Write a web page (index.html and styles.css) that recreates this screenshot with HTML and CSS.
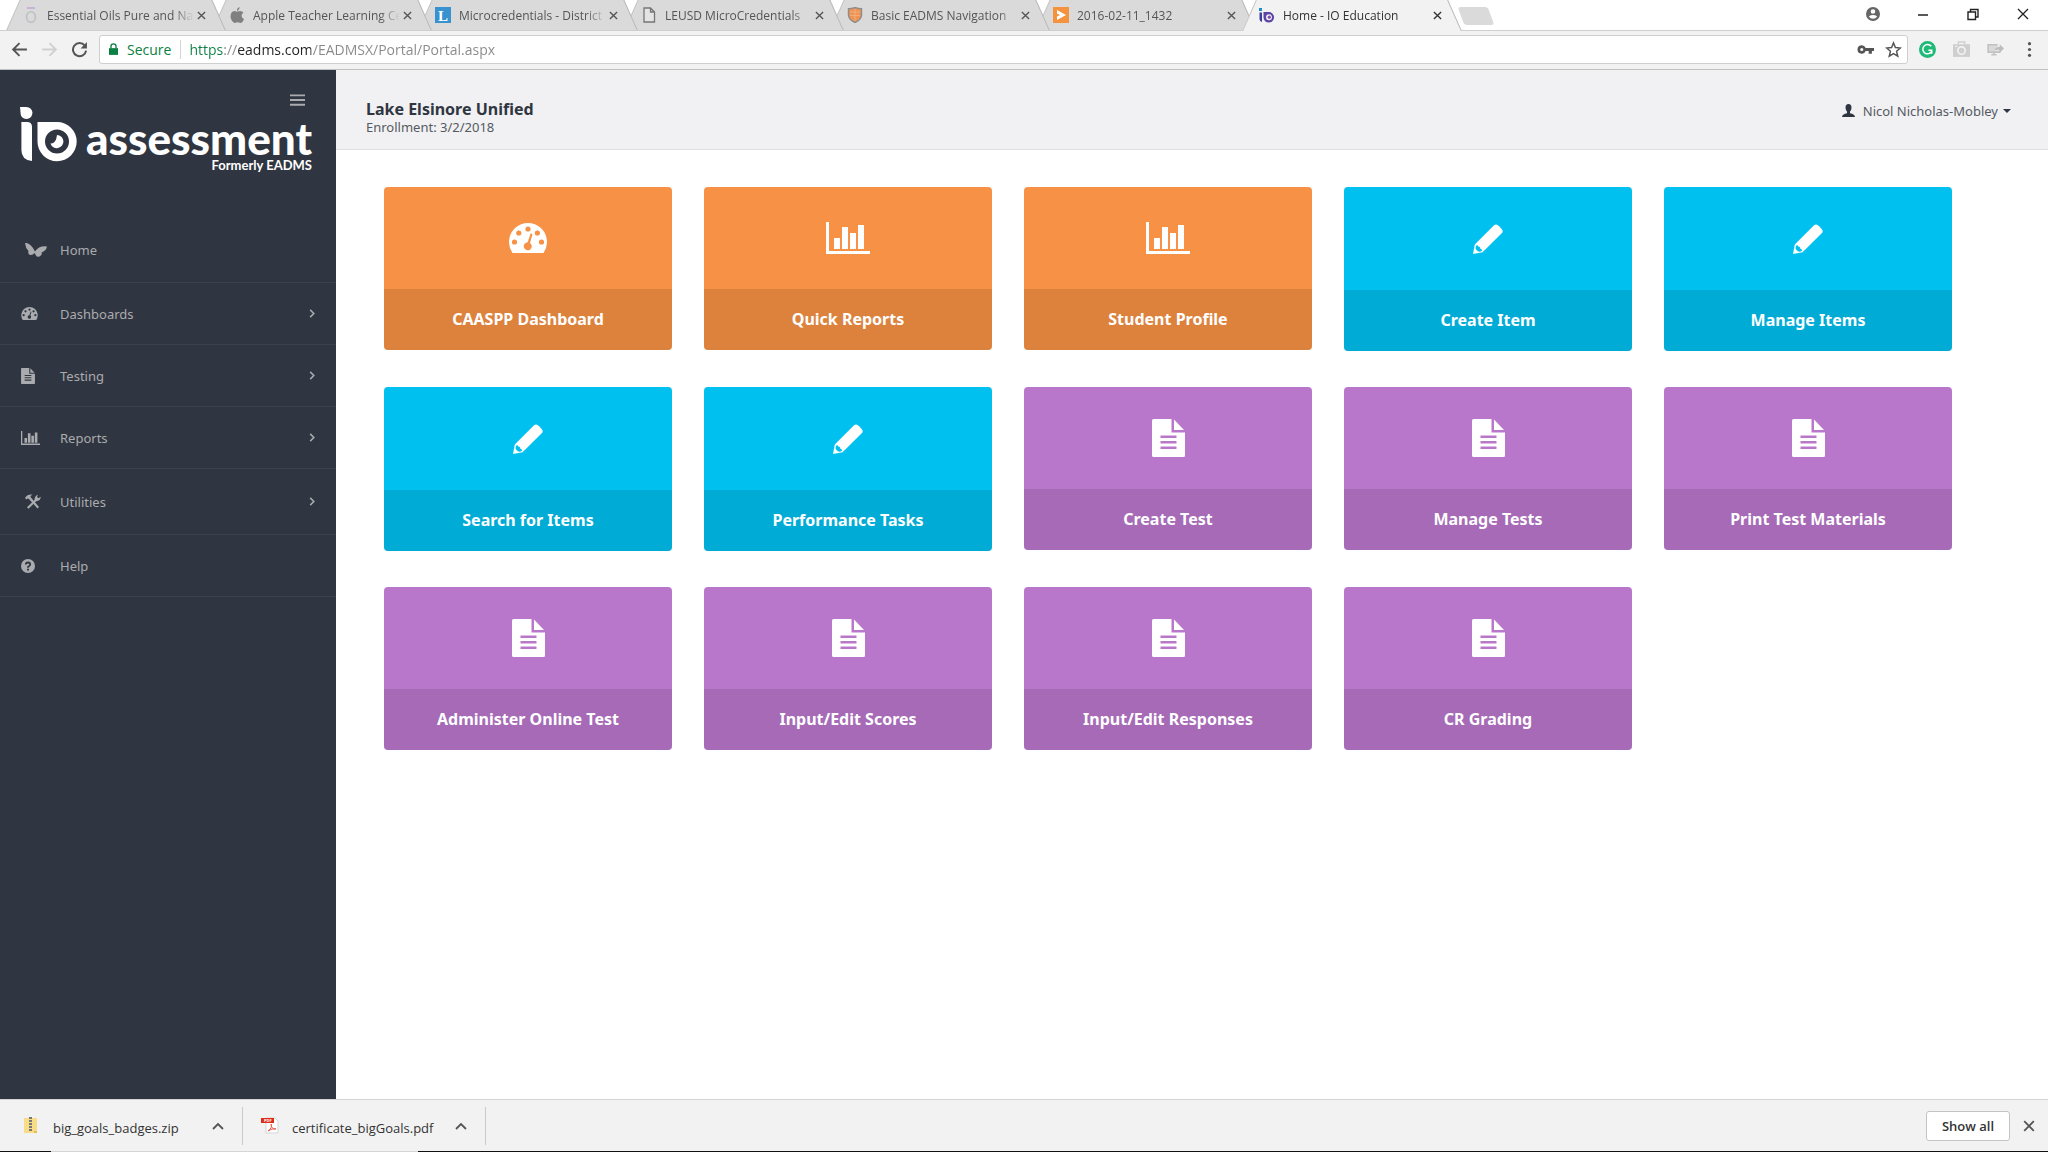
FILE: index.html
```html
<!DOCTYPE html>
<html lang="en">
<head>
    <meta charset="UTF-8">
    <meta name="viewport" content="width=device-width, initial-scale=1.0">
    <title>Home - IO Education</title>
    <link rel="stylesheet" href="styles.css">
</head>
<body>
    <!-- shared icons -->
    <svg class="sprite" aria-hidden="true">
        <symbol id="close" viewBox="0 0 10 10"><path d="M1 1l8 8M9 1l-8 8" fill="none" stroke="currentColor" stroke-width="1.5"/></symbol>
        <symbol id="right" viewBox="0 0 6 10"><path d="M1 1l4 4-4 4" fill="none" stroke="currentColor" stroke-width="1.7"/></symbol>
        <symbol id="up" viewBox="0 0 12 8"><path d="M1 7l5-5 5 5" fill="none" stroke="#555" stroke-width="1.8"/></symbol>
        <symbol id="gauge" viewBox="0 0 38 30">
            <path fill-rule="evenodd" d="M3.5 30A19 19 0 1 1 34.500 30ZM2.900 19a2.600 2.600 0 1 0 5.200 0a2.600 2.600 0 1 0-5.200 0ZM7.200 10a2.600 2.600 0 1 0 5.200 0a2.600 2.600 0 1 0-5.200 0ZM16.400 6a2.600 2.600 0 1 0 5.200 0a2.600 2.600 0 1 0-5.200 0ZM25.800 10a2.600 2.600 0 1 0 5.200 0a2.600 2.600 0 1 0-5.200 0ZM29.900 19a2.600 2.600 0 1 0 5.200 0a2.600 2.600 0 1 0-5.200 0ZM21.500 10.800L18.700 19.200A4 4 0 1 0 21 19.900L23.400 11.400Q22.800 10 21.500 10.800Z"/>
        </symbol>
        <symbol id="chart" viewBox="0 0 44 32"><path d="M0 0h3v29h41v3H0zM8 16h6v11H8zM16 5h6v22h-6zM24 11h6v16h-6zM32 3h6v24h-6z"/></symbol>
        <symbol id="pencil" viewBox="0 0 30 30"><path fill-rule="evenodd" d="M0 30L1.800 20.500L21 1.200Q23.500-.8 26.200 2.200L28.300 4.500Q31 7.300 28.500 9.500L9.500 28.300ZM3.300 21.500Q1.500 24.500 4 26.500Q6.500 29 8.800 26.800Q9.500 25.200 7.200 24.500Q7.400 22.500 5.300 22.500Q4.800 20.500 3.300 21.500Z"/></symbol>
        <symbol id="doc" viewBox="0 0 33 38"><path fill-rule="evenodd" d="M1.500 0H19.500V13.500H33V36.500Q33 38 31.500 38H1.500Q0 38 0 36.500V1.500Q0 0 1.500 0ZM22 0.500L32 11H22ZM8.500 16.500V19H24.500V16.500ZM8.500 22V24.500H24.500V22ZM8.500 27.500V30H24.500V27.500Z"/></symbol>
    </svg>

    <div class="tab-strip">
        <div class="tabs">
            <div class="tab">
                <svg class="favicon" viewBox="0 0 16 16"><ellipse cx="8" cy="10" rx="4.500" ry="5.300" fill="none" stroke="#bcbfc4" stroke-width="1.600"/><path d="M4 1h8" stroke="#c3a9d6" stroke-width="1.600"/></svg>
                <span class="tab-title">Essential Oils Pure and Natural</span>
                <button class="tab-close" aria-label="Close tab"><svg><use href="#close"/></svg></button>
            </div>
            <div class="tab">
                <svg class="favicon" viewBox="0 0 16 16"><path fill="#808080" d="M10.500 0Q10.800 2.700 8 4Q7.500 1.300 10.500 0ZM8 4.800Q9.500 4 11 4Q13.400 4 14.400 5.800Q12.300 7 12.600 9Q12.800 11 15 12Q13.500 16 11.300 16Q9.800 15.300 8.200 15.300Q6.500 16 5.500 16Q1.500 13.600 1.500 9Q2 4.200 5.500 4Q6.700 4.300 8 4.800Z"/></svg>
                <span class="tab-title">Apple Teacher Learning Center</span>
                <button class="tab-close" aria-label="Close tab"><svg><use href="#close"/></svg></button>
            </div>
            <div class="tab">
                <svg class="favicon" viewBox="0 0 16 16"><rect width="16" height="16" fill="#3792cf"/><text class="favicon-letter" x="8" y="14" text-anchor="middle">L</text></svg>
                <span class="tab-title">Microcredentials - District</span>
                <button class="tab-close" aria-label="Close tab"><svg><use href="#close"/></svg></button>
            </div>
            <div class="tab">
                <svg class="favicon" viewBox="0 0 16 16"><path d="M3 1h6.500l4 4v10H3zM9.500 1v4h4" fill="#e4e4e4" stroke="#757575" stroke-width="1.300"/></svg>
                <span class="tab-title">LEUSD MicroCredentials</span>
                <button class="tab-close" aria-label="Close tab"><svg><use href="#close"/></svg></button>
            </div>
            <div class="tab">
                <svg class="favicon" viewBox="0 0 16 16"><path d="M8 .5Q11 1.500 14.500 1.700V8.500Q13.800 13 8 15.500Q2.200 13 1.500 8.500V1.700Q5 1.500 8 .5Z" fill="#ed9455" stroke="#8c8c8c" stroke-width="1.400"/><path d="M3 5h10M3 8.500h10M8 2v12" stroke="#f5b78a" stroke-width=".7"/></svg>
                <span class="tab-title">Basic EADMS Navigation</span>
                <button class="tab-close" aria-label="Close tab"><svg><use href="#close"/></svg></button>
            </div>
            <div class="tab">
                <svg class="favicon" viewBox="0 0 16 16"><rect width="16" height="16" fill="#f5923e"/><path d="M4 3l9 5-9 5V9.500L7 8 4 6.500z" fill="#fff"/></svg>
                <span class="tab-title">2016-02-11_1432</span>
                <button class="tab-close" aria-label="Close tab"><svg><use href="#close"/></svg></button>
            </div>
            <div class="tab active">
                <svg class="favicon" viewBox="0 0 16 16"><path d="M0 1h3v3H0z" fill="#1a8fd0"/><path d="M.5 5.500H3V15Q.5 14.500.5 12z" fill="#3b3f9c"/><path fill-rule="evenodd" fill="#5b45a5" d="M4.500 5H10A5.300 5.300 0 1 1 4.500 10.500ZM10 7.300A3 3 0 1 0 10 13.300A3 3 0 1 0 10 7.300Z"/><circle cx="10.300" cy="10.200" r="1.600" fill="#7d4fb0"/></svg>
                <span class="tab-title">Home - IO Education</span>
                <button class="tab-close" aria-label="Close tab"><svg><use href="#close"/></svg></button>
            </div>
            <button class="new-tab" aria-label="New tab"></button>
        </div>
        <div class="window-controls">
            <button aria-label="Profile"><svg viewBox="0 0 16 16"><path fill="#666" fill-rule="evenodd" d="M8 1a7 7 0 1 0 0 14A7 7 0 1 0 8 1ZM8 3.200a2.300 2.300 0 1 1 0 4.600a2.300 2.300 0 1 1 0-4.600ZM3.800 10.300Q8 7.800 12.200 10.300Q10.800 12.800 8 12.800T3.800 10.300Z"/></svg></button>
            <button aria-label="Minimize"><svg viewBox="0 0 16 16"><path d="M3 9h10" stroke="#222" stroke-width="1.500"/></svg></button>
            <button aria-label="Restore"><svg viewBox="0 0 16 16"><path d="M3 6h7.500v7.500H3zM5.500 6V3.500H13V11h-2.500" fill="none" stroke="#222" stroke-width="1.400"/></svg></button>
            <button aria-label="Close"><svg viewBox="0 0 16 16"><path d="M3 3l10 10M13 3L3 13" stroke="#222" stroke-width="1.300"/></svg></button>
        </div>
    </div>

    <div class="toolbar">
        <button class="tool" aria-label="Back"><svg viewBox="0 0 16 16"><path d="M15 8H2M8 2L2 8l6 6" fill="none" stroke="#555" stroke-width="1.800"/></svg></button>
        <button class="tool" aria-label="Forward"><svg viewBox="0 0 16 16"><path d="M1 8h13M8 2l6 6-6 6" fill="none" stroke="#d0d0d0" stroke-width="1.800"/></svg></button>
        <button class="tool" aria-label="Reload"><svg viewBox="0 0 16 16"><path d="M13 4.300A6.200 6.200 0 1 0 14.200 9" fill="none" stroke="#555" stroke-width="1.900"/><path d="M15 1v6H9z" fill="#555"/></svg></button>
        <div class="omnibox">
            <svg class="lock" viewBox="0 0 10 14"><path d="M0 5.500h10V13H0z" fill="#0b8043"/><path d="M2.200 6V3.500a2.800 2.800 0 0 1 5.600 0V6" fill="none" stroke="#0b8043" stroke-width="1.500"/></svg>
            <label class="secure" for="url">Secure</label>
            <input class="url" id="url" type="text" value="https://eadms.com/EADMSX/Portal/Portal.aspx">
            <button class="tool small" aria-label="Saved password"><svg viewBox="0 0 16 16"><path fill="#555" fill-rule="evenodd" d="M4.500 4A4 4 0 1 0 8.200 9.500H11V12H14V9.500H16V6.500H8.200A4 4 0 0 0 4.500 4ZM4.500 6.500a1.500 1.500 0 1 1 0 3a1.500 1.500 0 1 1 0-3Z"/></svg></button>
            <button class="tool small" aria-label="Bookmark this page"><svg viewBox="0 0 16 16"><path d="M8 1.800l1.800 4.400 4.700.4-3.600 3.100 1.100 4.600-4-2.500-4 2.500 1.100-4.600L1.500 6.600l4.700-.4z" fill="none" stroke="#555" stroke-width="1.400"/></svg></button>
        </div>
        <div class="extensions">
            <button class="tool" aria-label="Grammarly"><svg viewBox="0 0 16 16"><circle cx="8" cy="8" r="8" fill="#1fb978"/><path d="M11.500 5A4.400 4.400 0 1 0 12 9.500V8.700H8.800M12 8.700V12" fill="none" stroke="#fff" stroke-width="1.400"/></svg></button>
            <button class="tool" aria-label="Camera"><svg viewBox="0 0 16 16"><path d="M5 3V1h6v2" fill="none" stroke="#cfcfcf" stroke-width="1.300"/><path d="M0 3h16v12H0z" fill="#cfcfcf"/><circle cx="8" cy="9" r="3.500" fill="none" stroke="#f2f2f2" stroke-width="1.500"/><path d="M2 5h2" stroke="#f2f2f2"/></svg></button>
            <button class="tool" aria-label="Screen share"><svg viewBox="0 0 16 16"><path d="M1 3h9v2L7 9h5v1.500H1z" fill="#d9d9d9"/><path d="M10 3.500H1v7h11V9M4 13h5M6.500 10v3" fill="none" stroke="#c2c2c2" stroke-width="1.500"/><path d="M7 9Q8 5.500 12 5.500V3l4 4-4 4V8.500Q9.500 8 7 9z" fill="#bdbdbd"/></svg></button>
            <button class="tool" aria-label="Menu"><svg viewBox="0 0 16 16"><g fill="#555"><circle cx="8" cy="2.500" r="1.500"/><circle cx="8" cy="8" r="1.500"/><circle cx="8" cy="13.500" r="1.500"/></g></svg></button>
        </div>
    </div>

    <div class="page">
        <aside class="sidebar">
            <button class="menu-toggle" aria-label="Toggle menu"><svg viewBox="0 0 16 12"><path d="M0 0h16v2H0zM0 5h16v2H0zM0 10h16v2H0z"/></svg></button>
            <a class="logo" href="#">
                <svg class="logo-mark" viewBox="0 0 57 55">
                    <g fill="#fff">
                        <path d="M0 0H6.500A6 6 0 1 1 .8 8Z"/>
                        <path d="M1.400 15H7Q12 15 12 20V54Q1.400 53 1.400 43Z"/>
                        <path fill-rule="evenodd" d="M17.500 15H37A19.600 19.600 0 1 1 17.500 34.500ZM37 22.500A12 12 0 1 0 37 46.500A12 12 0 1 0 37 22.500Z"/>
                        <path d="M37 28A6.600 6.600 0 1 1 30.500 36.500Q36 37 37 28Z"/>
                    </g>
                </svg>
                <span class="logo-text">
                    <span class="logo-name">assessment</span>
                    <span class="logo-sub">Formerly EADMS</span>
                </span>
            </a>
            <nav class="nav">
                <a class="nav-link wide" href="#">
                    <span class="nav-icon"><svg width="22" height="14" viewBox="0 0 22 14"><path d="M0 0Q4-.5 8 5L10 8.500Q14 2.500 22 3.500Q21 8 16.500 9.500Q17.500 12 14.500 13.500Q12 14.500 11 12.500L9.500 10Q8 12.500 5 12Q2.500 11 3.500 8Q.5 5 0 0Z"/></svg></span>
                    Home
                </a>
                <a class="nav-link" href="#">
                    <span class="nav-icon"><svg width="17" height="13"><use href="#gauge"/></svg></span>
                    Dashboards
                    <svg class="arrow"><use href="#right"/></svg>
                </a>
                <a class="nav-link" href="#">
                    <span class="nav-icon"><svg width="14" height="16"><use href="#doc"/></svg></span>
                    Testing
                    <svg class="arrow"><use href="#right"/></svg>
                </a>
                <a class="nav-link" href="#">
                    <span class="nav-icon"><svg width="19" height="14"><use href="#chart"/></svg></span>
                    Reports
                    <svg class="arrow"><use href="#right"/></svg>
                </a>
                <a class="nav-link wide" href="#">
                    <span class="nav-icon"><svg width="16" height="15" viewBox="0 0 16 15"><path d="M0 4Q2.500 0 7.500.7Q5 1.500 5.500 3L14 13L12.500 14.500L4 5Q2.500 4 1.500 5.500Z"/><path d="M2 13.200L9.500 6Q9.300 2 13 .8L12 3L13.500 4.200L15.800 2.800Q15.500 6.800 11.200 7.300L3.500 14.800Z"/></svg></span>
                    Utilities
                    <svg class="arrow"><use href="#right"/></svg>
                </a>
                <a class="nav-link" href="#">
                    <span class="nav-icon"><svg width="14" height="14" viewBox="0 0 14 14"><circle cx="7" cy="7" r="7"/><path d="M4.800 5.500Q4.800 3.500 7 3.500T9.200 5.500Q9.200 6.500 7 8V8.700" fill="none" stroke="#303641" stroke-width="1.800"/><path d="M6 9.700h2v1.800H6z" fill="#303641"/></svg></span>
                    Help
                </a>
            </nav>
        </aside>

        <main class="main">
            <header class="page-header">
                <div class="school">
                    <h1 class="district">Lake Elsinore Unified</h1>
                    <p class="enrollment">Enrollment: 3/2/2018</p>
                </div>
                <button class="user">
                    <svg class="user-icon" viewBox="0 0 13 13"><path d="M6.500 0Q9.500 0 9.500 3.500Q9.500 6 8 7.500V9.300Q13 10.300 13 13H0Q0 10.300 5 9.300V7.500Q3.500 6 3.500 3.500Q3.500 0 6.500 0Z"/></svg>
                    <span>Nicol Nicholas-Mobley</span>
                    <svg class="caret" viewBox="0 0 8 4"><path d="M0 0h8L4 4z"/></svg>
                </button>
            </header>

            <div class="tiles">
                <a class="tile orange" href="#"><span class="tile-icon"><svg width="38" height="30"><use href="#gauge"/></svg></span><span class="tile-title">CAASPP Dashboard</span></a>
                <a class="tile orange" href="#"><span class="tile-icon"><svg width="44" height="32"><use href="#chart"/></svg></span><span class="tile-title">Quick Reports</span></a>
                <a class="tile orange" href="#"><span class="tile-icon"><svg width="44" height="32"><use href="#chart"/></svg></span><span class="tile-title">Student Profile</span></a>
                <a class="tile blue" href="#"><span class="tile-icon"><svg width="30" height="30"><use href="#pencil"/></svg></span><span class="tile-title">Create Item</span></a>
                <a class="tile blue" href="#"><span class="tile-icon"><svg width="30" height="30"><use href="#pencil"/></svg></span><span class="tile-title">Manage Items</span></a>

                <a class="tile blue" href="#"><span class="tile-icon"><svg width="30" height="30"><use href="#pencil"/></svg></span><span class="tile-title">Search for Items</span></a>
                <a class="tile blue" href="#"><span class="tile-icon"><svg width="30" height="30"><use href="#pencil"/></svg></span><span class="tile-title">Performance Tasks</span></a>
                <a class="tile purple" href="#"><span class="tile-icon"><svg width="33" height="38"><use href="#doc"/></svg></span><span class="tile-title">Create Test</span></a>
                <a class="tile purple" href="#"><span class="tile-icon"><svg width="33" height="38"><use href="#doc"/></svg></span><span class="tile-title">Manage Tests</span></a>
                <a class="tile purple" href="#"><span class="tile-icon"><svg width="33" height="38"><use href="#doc"/></svg></span><span class="tile-title">Print Test Materials</span></a>

                <a class="tile purple" href="#"><span class="tile-icon"><svg width="33" height="38"><use href="#doc"/></svg></span><span class="tile-title">Administer Online Test</span></a>
                <a class="tile purple" href="#"><span class="tile-icon"><svg width="33" height="38"><use href="#doc"/></svg></span><span class="tile-title">Input/Edit Scores</span></a>
                <a class="tile purple" href="#"><span class="tile-icon"><svg width="33" height="38"><use href="#doc"/></svg></span><span class="tile-title">Input/Edit Responses</span></a>
                <a class="tile purple" href="#"><span class="tile-icon"><svg width="33" height="38"><use href="#doc"/></svg></span><span class="tile-title">CR Grading</span></a>
            </div>
        </main>
    </div>

    <footer class="downloads">
        <div class="download">
            <svg class="file-icon" viewBox="0 0 18 18"><path d="M2 1h13v13l-2 2H2z" fill="#f8dd86"/><path d="M12 14h3v2h-3z" fill="#e3bd55"/><path d="M8.500 0v15" stroke="#777" stroke-width="3" stroke-dasharray="2 1"/></svg>
            <a class="file-name" href="#">big_goals_badges.zip</a>
            <button class="tool small" aria-label="Options"><svg class="up"><use href="#up"/></svg></button>
        </div>
        <div class="download">
            <svg class="file-icon" viewBox="0 0 18 18"><path d="M5 1h9l3 3v12H5z" fill="#fff" stroke="#d5d5d5"/><path d="M0 1h13v5H0z" fill="#dd2c17"/><text class="pdf-label" x="3" y="5">PDF</text><path d="M7 14Q12 10 10 7Q10 12 15 12Q11 11 7 14" fill="none" stroke="#ee5a4a"/></svg>
            <a class="file-name" href="#">certificate_bigGoals.pdf</a>
            <button class="tool small" aria-label="Options"><svg class="up"><use href="#up"/></svg></button>
        </div>
        <button class="show-all">Show all</button>
        <button class="close-bar" aria-label="Close downloads bar"><svg><use href="#close"/></svg></button>
    </footer>
    <div class="taskbar-edge"></div>
</body>
</html>
```

FILE: styles.css
```css
* {
    box-sizing: border-box;
}

body {
    margin: 0;
    height: 100vh;
    display: flex;
    flex-direction: column;
    overflow: hidden;
    background: #fff;
    font-family: "Noto Sans", "Open Sans", sans-serif;
    font-size: 13px;
    color: #303641;
}

button {
    padding: 0;
    border: none;
    background: none;
    font: inherit;
    color: inherit;
    cursor: pointer;
}

a {
    color: inherit;
    text-decoration: none;
}

svg {
    display: block;
    flex: none;
}

.sprite {
    position: absolute;
    width: 0;
    height: 0;
}

/* Browser tabs */
.tab-strip {
    display: flex;
    justify-content: space-between;
    height: 31px;
    padding-left: 13px;
    border-bottom: 1px solid #cfcfcf;
    font-family: "Open Sans", sans-serif;
    font-size: 12px;
    color: #555;
}

.tabs {
    display: flex;
    min-width: 0;
}

.tab {
    position: relative;
    display: flex;
    align-items: center;
    width: 206px;
    height: 30px;
    padding: 0 10px;
}

.tab::before,
.tab::after {
    content: "";
    position: absolute;
    top: 0;
    bottom: 0;
    background: #dadada;
}

.tab::before {
    left: 0;
    right: 50%;
    border-left: 1px solid #c4c4c4;
    transform: skewX(-24deg);
}

.tab::after {
    left: 40%;
    right: 0;
    z-index: 1;
    border-right: 1px solid #b8b8b8;
    transform: skewX(24deg);
}

.tab.active {
    color: #333;
}

.tab.active::before,
.tab.active::after {
    z-index: 2;
    bottom: -1px;
    background: #f2f2f2;
}

.tab > * {
    position: relative;
    z-index: 3;
}

.favicon {
    width: 16px;
    height: 16px;
    margin-right: 8px;
}

.favicon-letter {
    font: bold 15px "Liberation Serif", serif;
    fill: #fff;
}

.tab-title {
    flex: 1;
    min-width: 0;
    overflow: hidden;
    white-space: nowrap;
    mask-image: linear-gradient(to right, #000 calc(100% - 20px), transparent);
}

.tab-close {
    padding: 3px;
}

.tab-close svg {
    width: 9px;
    height: 9px;
}

.new-tab {
    width: 30px;
    height: 18px;
    margin: 7px 0 0 6px;
    border-radius: 3px;
    background: #dadada;
    transform: skewX(20deg);
}

.window-controls {
    display: flex;
    align-items: center;
    height: 28px;
}

.window-controls button {
    width: 50px;
}

.window-controls svg {
    width: 16px;
    height: 16px;
    margin: 0 auto;
}

/* Address bar */
.toolbar {
    display: flex;
    align-items: center;
    height: 39px;
    padding: 0 4px 1px;
    background: #f2f2f2;
    border-bottom: 1px solid #c0c0c0;
}

.tool {
    width: 30px;
}

.tool svg {
    width: 17px;
    height: 17px;
    margin: 0 auto;
}

.tool.small {
    width: 28px;
}

.omnibox {
    flex: 1;
    display: flex;
    align-items: center;
    height: 29px;
    margin-left: 5px;
    padding-left: 9px;
    background: #fff;
    border: 1px solid #cfcfcf;
    border-radius: 3px;
    font-family: "Open Sans", sans-serif;
    font-size: 14px;
}

.lock {
    width: 9px;
    height: 13px;
}

.secure {
    margin: 0 8px 0 9px;
    padding-right: 9px;
    border-right: 1px solid #d5d5d5;
    color: #0b8043;
}

/* scheme, host and path are tinted separately */
.url {
    flex: 1;
    min-width: 0;
    padding: 0;
    border: none;
    outline: none;
    font: inherit;
    color: transparent;
    background: linear-gradient(to right, #0b8043 35px, #888 35px 49px, #222 49px 122px, #888 122px);
    background-clip: text;
}

.extensions {
    display: flex;
    gap: 4px;
    margin-left: 4px;
}

/* Page */
.page {
    flex: 1;
    display: flex;
    min-height: 0;
}

.sidebar {
    display: flex;
    flex-direction: column;
    width: 336px;
    background: #303641;
    color: #aaabae;
}

.menu-toggle {
    align-self: flex-end;
    margin: 24px 31px 0 0;
}

.menu-toggle svg {
    width: 15px;
    height: 12px;
    fill: #aaabae;
}

.logo {
    display: flex;
    align-items: flex-start;
    justify-content: space-between;
    height: 111px;
    padding: 1px 24px 0 20px;
    color: #fff;
}

.logo-mark {
    width: 57px;
    height: 55px;
}

.logo-text {
    display: flex;
    flex-direction: column;
    align-items: flex-end;
    padding-top: 10px;
    font-family: Lato, sans-serif;
}

.logo-name {
    font-size: 44px;
    font-weight: 900;
    line-height: 42px;
}

.logo-sub {
    font-size: 13px;
    font-weight: 700;
    line-height: 12px;
}

.nav-link {
    display: flex;
    align-items: center;
    height: 62px;
    padding: 0 21px;
    border-bottom: 1px solid #3b414c;
}

.nav-link.wide {
    height: 66px;
}

.nav-icon {
    width: 39px;
}

.nav-link svg {
    fill: #aaabae;
}

.wide .nav-icon {
    padding-left: 4px;
}

.nav-link .arrow {
    width: 6px;
    height: 9px;
    margin-left: auto;
}

.main {
    flex: 1;
    min-width: 0;
}

.page-header {
    display: flex;
    justify-content: space-between;
    align-items: center;
    height: 80px;
    padding: 2px 37px 0 30px;
    background: #f1f1f4;
    border-bottom: 1px solid #dfdfe2;
}

.school {
    padding-top: 12px;
}

.district {
    margin: 0;
    font-size: 16px;
    line-height: 20px;
}

.enrollment {
    margin: 0;
    font-size: 13px;
    line-height: 16px;
    color: #555a60;
}

.user {
    display: flex;
    align-items: center;
    color: #555a60;
}

.user-icon {
    width: 13px;
    height: 13px;
    margin-right: 8px;
    fill: #303641;
}

.caret {
    width: 8px;
    height: 4px;
    margin-left: 5px;
    fill: #303641;
}

.tiles {
    display: grid;
    grid-template-columns: repeat(5, 1fr);
    align-items: start;
    gap: 36px 32px;
    padding: 37px 96px 37px 48px;
}

.tile {
    display: block;
    overflow: hidden;
    border-radius: 4px;
    color: #fff;
    text-align: center;
}

.tile-icon {
    display: flex;
    justify-content: center;
    align-items: center;
    height: 102px;
}

.blue .tile-icon {
    height: 103px;
}

.tile-icon svg {
    fill: #fff;
}

.tile-title {
    display: block;
    background: rgba(0, 0, 0, 0.1);
    font-size: 16px;
    font-weight: 700;
    line-height: 61px;
}

.orange {
    background: #f79145;
}

.blue {
    background: #00c0ef;
}

.purple {
    background: #b977cb;
}

/* Downloads bar */
.downloads {
    display: flex;
    align-items: center;
    height: 52px;
    padding-right: 13px;
    background: #f2f2f2;
    border-top: 1px solid #d5d5d5;
    font-family: "Open Sans", sans-serif;
    color: #333;
}

.download {
    display: flex;
    align-items: center;
    min-width: 243px;
    height: 38px;
    padding: 0 10px 0 18px;
    border-right: 1px solid #cacaca;
}

.download:first-child {
    padding-left: 22px;
}

.file-icon {
    width: 18px;
    height: 18px;
    margin-right: 13px;
}

.pdf-label {
    font: bold 4px "Open Sans", sans-serif;
    fill: #fff;
}

.file-name {
    flex: 1;
    padding-top: 5px;
    white-space: nowrap;
}

.tool .up {
    width: 12px;
    height: 8px;
}

.show-all {
    width: 84px;
    height: 30px;
    margin: 0 13px 0 auto;
    background: #fff;
    border: 1px solid #c4c4c4;
    border-radius: 3px;
    font-weight: 600;
}

.close-bar svg {
    width: 12px;
    height: 12px;
    color: #555;
}

.taskbar-edge {
    height: 1px;
    background: linear-gradient(to right, #111 51px, #d5d5d5 51px 418px, #111 418px);
}
```
